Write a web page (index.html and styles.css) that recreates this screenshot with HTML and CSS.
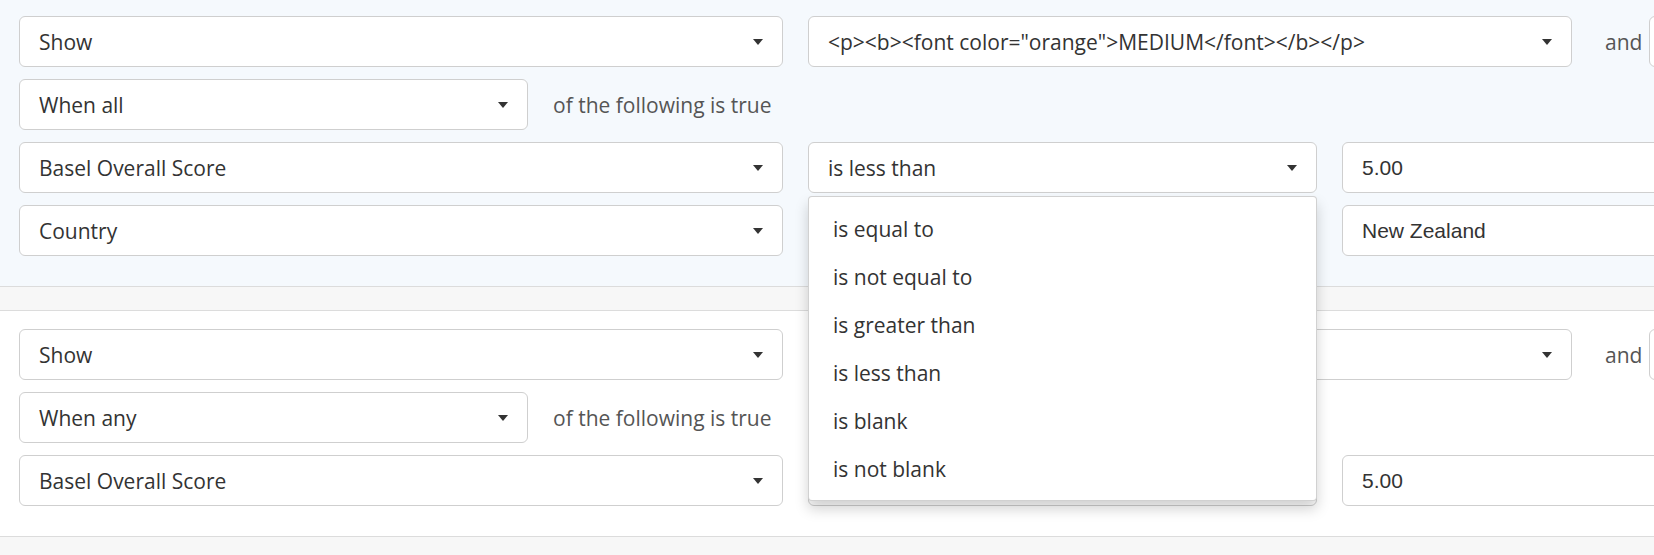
FILE: index.html
```html
<!DOCTYPE html>
<html lang="en">
<head>
<meta charset="utf-8">
<title>Rules</title>
<link rel="stylesheet" href="styles.css">
</head>
<body>
<div class="page">
  <section class="rule rule-active">
    <div class="row">
      <div class="select w-col">Show<span class="caret"></span></div>
      <div class="select w-col">&lt;p&gt;&lt;b&gt;&lt;font color="orange"&gt;MEDIUM&lt;/font&gt;&lt;/b&gt;&lt;/p&gt;<span class="caret"></span></div>
      <span class="label and">and</span>
      <div class="select w-col"></div>
    </div>
    <div class="row">
      <div class="select w-half">When all<span class="caret"></span></div>
      <span class="label">of the following is true</span>
    </div>
    <div class="row">
      <div class="select w-col">Basel Overall Score<span class="caret"></span></div>
      <div class="op-wrap">
        <div class="select w-op">is less than<span class="caret"></span></div>
        <ul class="menu">
          <li>is equal to</li>
          <li>is not equal to</li>
          <li>is greater than</li>
          <li>is less than</li>
          <li>is blank</li>
          <li>is not blank</li>
        </ul>
      </div>
      <div class="input w-input">5.00</div>
    </div>
    <div class="row">
      <div class="select w-col">Country<span class="caret"></span></div>
      <div class="select w-op"><span class="caret"></span></div>
      <div class="input w-input">New Zealand</div>
    </div>
  </section>
  <div class="band"></div>
  <section class="rule rule-plain">
    <div class="row">
      <div class="select w-col">Show<span class="caret"></span></div>
      <div class="select w-col"><span class="caret"></span></div>
      <span class="label and">and</span>
      <div class="select w-col"></div>
    </div>
    <div class="row">
      <div class="select w-half">When any<span class="caret"></span></div>
      <span class="label">of the following is true</span>
    </div>
    <div class="row">
      <div class="select w-col">Basel Overall Score<span class="caret"></span></div>
      <div class="select w-op"><span class="caret"></span></div>
      <div class="input w-input">5.00</div>
    </div>
  </section>
</div>
</body>
</html>
```
FILE: styles.css
```css
html, body {
  margin: 0;
  padding: 0;
}
body {
  width: 1654px;
  height: 555px;
  overflow: hidden;
  background: #f7f7f7;
  font-family: "Open Sans", "Noto Sans", sans-serif;
  font-size: 21px;
  color: #333;
}
.page {
  width: 1654px;
  overflow: hidden;
}
.rule {
  display: flex;
  flex-direction: column;
  gap: 12px;
  padding-left: 19px;
}
.rule-active {
  background: #f5f9fd;
  padding-top: 16px;
  padding-bottom: 30px;
  border-bottom: 1px solid #dcdcdc;
}
.band {
  height: 23px;
  background: #f7f7f7;
}
.rule-plain {
  background: #fff;
  border-top: 1px solid #dcdcdc;
  border-bottom: 1px solid #dcdcdc;
  padding-top: 18px;
  padding-bottom: 30px;
}
.row {
  display: flex;
  align-items: center;
  gap: 25px;
  height: 51px;
}
.select, .input {
  box-sizing: border-box;
  height: 51px;
  background: #fff;
  border: 1px solid #cfcfcf;
  border-radius: 6px;
  display: flex;
  align-items: center;
  padding: 0 19px;
  white-space: nowrap;
  flex: none;
}
.input {
  font-family: "Liberation Sans", Arial, sans-serif;
  font-size: 21px;
  color: #333;
}
.w-col { width: 764px; }
.w-half { width: 509px; }
.w-op { width: 509px; }
.w-input { width: 509px; }
.caret {
  margin-left: auto;
  width: 0;
  height: 0;
  border-left: 5px solid transparent;
  border-right: 5px solid transparent;
  border-top: 6px solid #333;
  flex: none;
}
.label {
  color: #555;
  white-space: nowrap;
}
.and {
  margin-left: 8px;
  margin-right: -18px;
}
.op-wrap {
  position: relative;
  flex: none;
}
.menu {
  position: absolute;
  top: 54px;
  left: 0;
  z-index: 10;
  box-sizing: border-box;
  width: 509px;
  margin: 0;
  padding: 8px 0 7px;
  list-style: none;
  background: #fff;
  border: 1px solid rgba(0, 0, 0, 0.18);
  border-radius: 4px;
  box-shadow: 0 8px 14px rgba(0, 0, 0, 0.18);
}
.menu li {
  height: 48px;
  display: flex;
  align-items: center;
  padding-left: 24px;
  color: #333;
}
```
